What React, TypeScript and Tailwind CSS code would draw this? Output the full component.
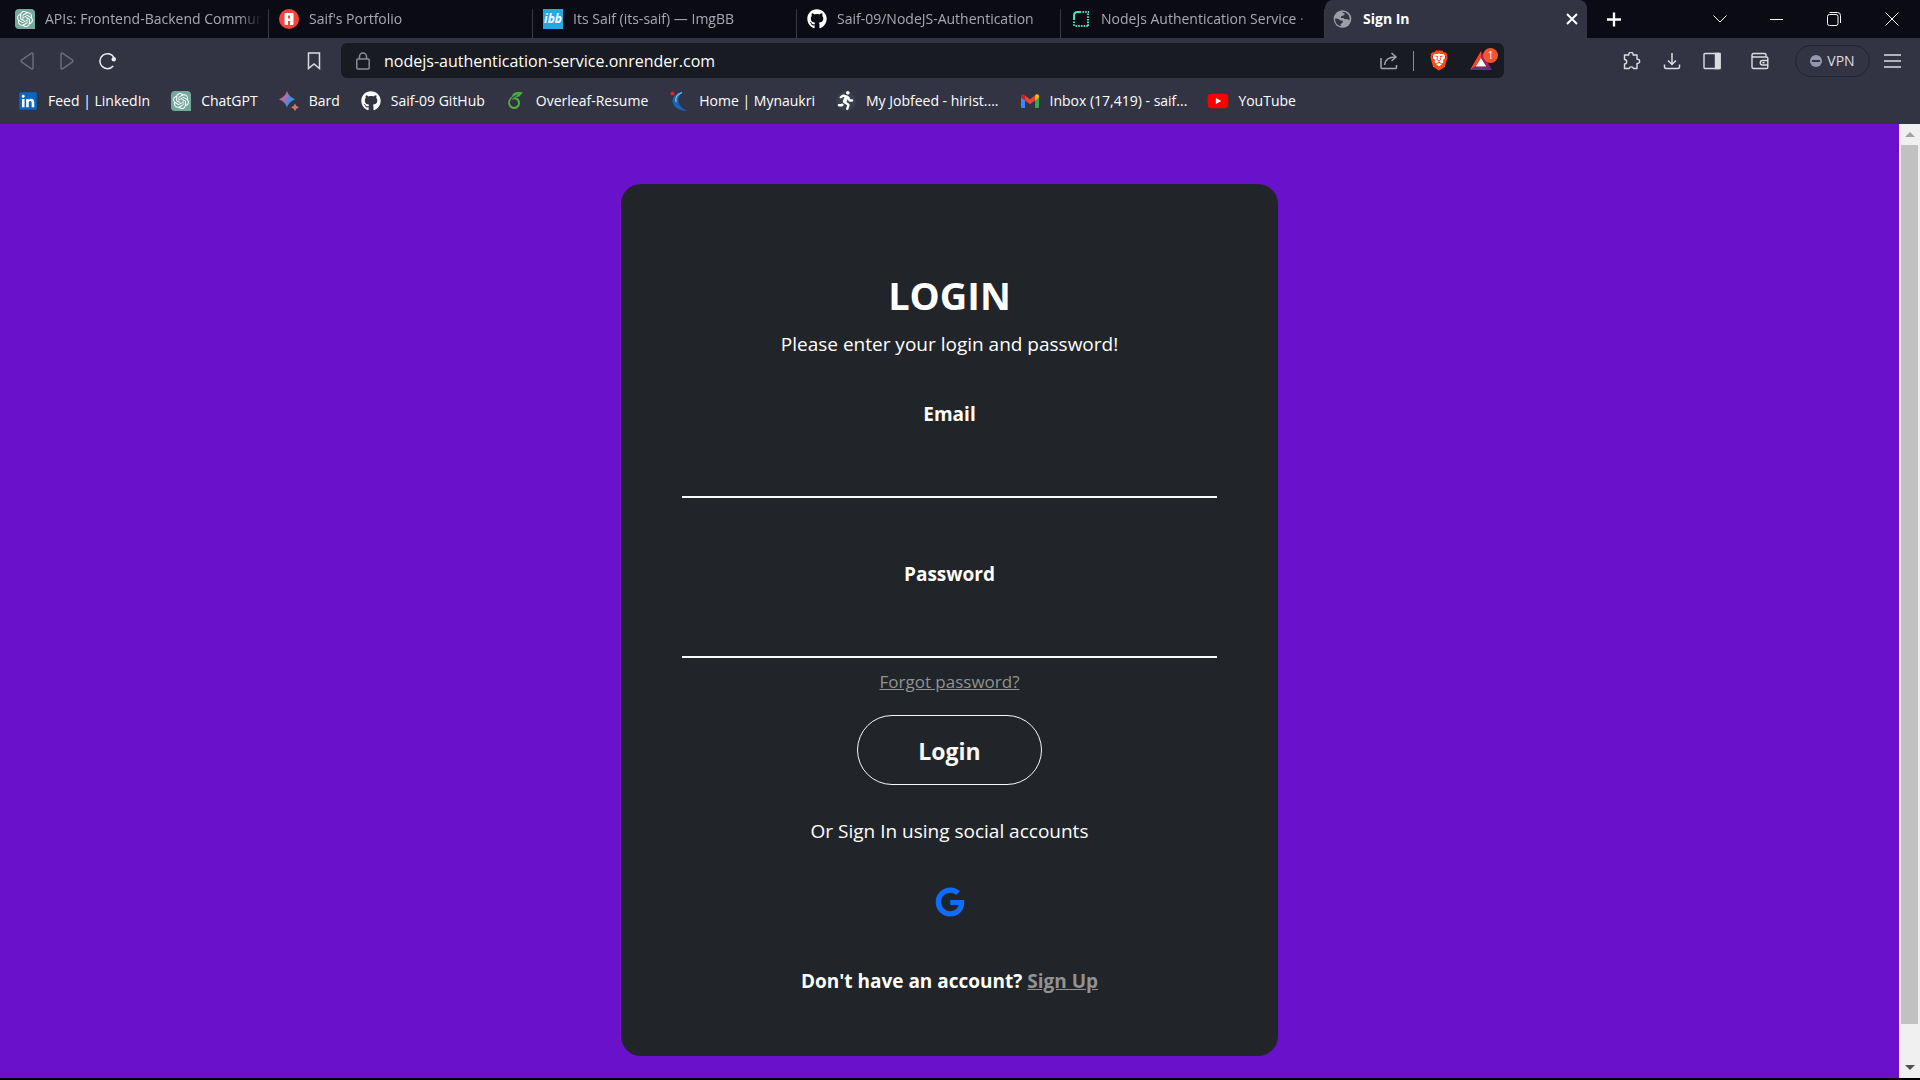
import type { ReactNode } from 'react';
import { FaGithub, FaGoogle, FaLinkedin, FaRunning, FaYoutube } from 'react-icons/fa';
import { SiBrave, SiOpenai, SiOverleaf } from 'react-icons/si';

function OpenAiBadge() {
  return (
    <span className="flex size-5 items-center justify-center rounded-l-[4px] rounded-tr-[4px] bg-[#74aa9c] text-white">
      <SiOpenai size={16} />
    </span>
  );
}

function PortfolioIcon() {
  return (
    <svg width="20" height="20" viewBox="0 0 20 20">
      <circle cx="10" cy="10" r="10" fill="#f9423a" />
      <rect x="5.500" y="4" width="9" height="12" rx="1" fill="#fff" />
      <rect x="9" y="6.500" width="2" height="3" fill="#f9423a" />
      <rect x="9" y="12" width="2" height="4" fill="#f9423a" />
    </svg>
  );
}

function ImgBbIcon() {
  return (
    <span className="flex size-5 items-center justify-center bg-[#23a8e0] text-xs leading-5 font-bold text-white italic">
      ibb
    </span>
  );
}

function RenderIcon() {
  return (
    <svg width="20" height="20" viewBox="0 0 20 20" fill="none" stroke="#46e3b7" strokeWidth="2">
      <path d="M3 11V6.500Q3 3 6.500 3H10" />
      <path d="M11.500 3H18M17 4.500V18M3 12.500V18M4.500 17H17" strokeDasharray="1.600 1.100" />
    </svg>
  );
}

function GlobeIcon() {
  return (
    <svg width="20" height="20" viewBox="0 0 20 20">
      <circle cx="9.500" cy="10" r="8.800" fill="#9da0a8" />
      <path d="M2 9.500l3 .2 2.600 1.800 2.200.3-.2 2-2 1.200v2.400A7.400 7.400 0 0 1 2 9.500z" fill="#323443" />
      <path d="M9.500 2.700l3 .6 3.200 2.600 1.100 3.800-.8 1.600-1.700-1.300-2.500.2-1.300-1.200-2.400.1-.2-1.600 2-.9 1.500-.4.1-1.800-2-.8z" fill="#323443" />
    </svg>
  );
}

function BardIcon() {
  return (
    <svg width="20" height="20" viewBox="0 0 20 20">
      <defs>
        <linearGradient id="bard" x1="0" y1="0.3" x2="1" y2="0.7">
          <stop offset="0" stopColor="#d96570" />
          <stop offset="0.4" stopColor="#a56fb8" />
          <stop offset="0.65" stopColor="#3f8fe0" />
          <stop offset="1" stopColor="#4a9be8" />
        </linearGradient>
      </defs>
      <path d="M8 0Q10 6 16 8.200 10 10.500 8 16.500 6 10.500 0 8.200 6 6 8 0z" fill="url(#bard)" />
      <path d="M16 12.500Q16.800 15.500 20 16.300 16.800 17.200 16 20 15.200 17.200 12 16.300 15.200 15.500 16 12.500z" fill="#d9756f" />
    </svg>
  );
}

function NaukriIcon() {
  return (
    <svg width="20" height="20" viewBox="0 0 20 20">
      <path d="M13.500 1C6.500 2 2.500 6.500 3.800 11.500 5.200 16.500 10 19.700 18 20c-5-2.500-8.500-6-8.700-10C9.200 6.500 10.500 3.500 13.500 1z" fill="#1567b8" />
      <path d="M13 1.500C8 3.500 6 7 7 11" fill="none" stroke="#8ec4f0" strokeWidth="1.200" />
      <circle cx="3.500" cy="2.500" r="2" fill="#e8202a" />
    </svg>
  );
}

function HiristIcon() {
  return (
    <span className="flex size-5 items-center justify-center rounded-full bg-[#3a3f4e] text-white">
      <FaRunning size={19} />
    </span>
  );
}

function GmailIcon() {
  return (
    <svg width="20" height="20" viewBox="0 0 20 20">
      <path d="M1 6v9.700C1 16.400 1.600 17 2.300 17H5V9z" fill="#4285f4" />
      <path d="M15 9v8h2.700c.7 0 1.300-.6 1.300-1.300V6z" fill="#34a853" />
      <path d="M5 4.500V9.500l5 3.800 5-3.800V4.500L10 8.300z" fill="#ea4335" />
      <path d="M1 5v1.500l4 3V4.500L4.100 3.600C2.800 2.600 1 3.500 1 5z" fill="#c5221f" />
      <path d="M15 4.500v5l4-3V5c0-1.500-1.800-2.400-3.100-1.400z" fill="#fbbc04" />
    </svg>
  );
}

function BatIcon() {
  return (
    <svg width="22" height="22" viewBox="0 0 22 22">
      <path d="M11 1L0 20l5.500-3.500L11 8z" fill="#ff4724" />
      <path d="M11 1l11 19-5.500-3.500L11 8z" fill="#9e1f63" />
      <path d="M0 20h22l-5.500-3.500h-11z" fill="#662d91" />
      <path d="M11 8l5.300 8.500H5.700z" fill="#fff" />
    </svg>
  );
}

type Entry = { title: string; icon: ReactNode };

const tabs: Entry[] = [
  { title: 'APIs: Frontend-Backend Commun', icon: <OpenAiBadge /> },
  { title: "Saif's Portfolio", icon: <PortfolioIcon /> },
  { title: 'Its Saif (its-saif) — ImgBB', icon: <ImgBbIcon /> },
  { title: 'Saif-09/NodeJS-Authentication', icon: <FaGithub size={20} color="#fff" /> },
  { title: 'NodeJs Authentication Service ·', icon: <RenderIcon /> },
];

const bookmarks: Entry[] = [
  {
    title: 'Feed | LinkedIn',
    icon: (
      <span className="flex size-4 items-center justify-center bg-white">
        <FaLinkedin size={20} color="#0a66c2" className="shrink-0" />
      </span>
    ),
  },
  { title: 'ChatGPT', icon: <OpenAiBadge /> },
  { title: 'Bard', icon: <BardIcon /> },
  { title: 'Saif-09 GitHub', icon: <FaGithub size={20} color="#fff" /> },
  { title: 'Overleaf-Resume', icon: <SiOverleaf size={17} color="#4cb13f" /> },
  { title: 'Home | Mynaukri', icon: <NaukriIcon /> },
  { title: 'My Jobfeed - hirist....', icon: <HiristIcon /> },
  { title: 'Inbox (17,419) - saif...', icon: <GmailIcon /> },
  {
    title: 'YouTube',
    icon: (
      <span className="flex h-2.5 w-3 items-center justify-center bg-white">
        <FaYoutube size={22} color="#f00" className="shrink-0" />
      </span>
    ),
  },
];

function TabStrip() {
  return (
    <div className="flex h-[38px] bg-[#0b0b15] pl-[5px]">
      <div className="flex min-w-0 items-end" role="tablist">
        {tabs.map((tab) => (
          <button
            key={tab.title}
            role="tab"
            aria-selected={false}
            className="flex h-[29px] w-[264px] min-w-0 shrink items-center gap-2.5 border-r border-[#3a3a42] pr-1.5 pb-[9px] pl-2.5 text-left text-[#a9a9ad]"
          >
            <span className="flex size-5 shrink-0 items-center justify-center">{tab.icon}</span>
            <span className="min-w-0 flex-1 overflow-hidden mask-r-from-[calc(100%-24px)] whitespace-nowrap">
              {tab.title}
            </span>
          </button>
        ))}
        <div className="flex h-[38px] w-[262px] shrink-0 items-center rounded-t-lg bg-[#323443] pr-[9px] pl-2 text-white">
          <button role="tab" aria-selected className="flex flex-1 items-center gap-2.5 font-bold">
            <GlobeIcon />
            Sign In
          </button>
          <button aria-label="Close tab" className="flex size-3 items-center justify-center">
            <svg width="12" height="12" viewBox="0 0 12 12" stroke="currentColor" strokeWidth="2">
              <path d="M1 1l10 10M11 1L1 11" />
            </svg>
          </button>
        </div>
      </div>
      <button aria-label="New tab" className="ml-5 flex w-[14px] items-center">
        <svg width="15" height="15" viewBox="0 0 15 15" stroke="#fff" strokeWidth="2.500">
          <path d="M7.500 0v15M0 7.500h15" />
        </svg>
      </button>
      <div className="ml-auto flex">
        <button aria-label="Search tabs" className="flex w-[57px] items-center justify-center">
          <svg width="14" height="8" viewBox="0 0 14 8" fill="none" stroke="#fff">
            <path d="M.5.5L7 7 13.500.5" />
          </svg>
        </button>
        <button aria-label="Minimize" className="flex w-[57px] items-center justify-center">
          <svg width="13" height="1" viewBox="0 0 13 1">
            <path d="M0 0h13v1H0z" fill="#fff" />
          </svg>
        </button>
        <button aria-label="Restore" className="flex w-[58px] items-center justify-center">
          <svg width="14" height="14" viewBox="0 0 14 14" fill="none" stroke="#fff">
            <rect x="0.5" y="2.500" width="10.500" height="11" rx="2" />
            <path d="M2.500.5H10.500Q13.500.5 13.500 3.500V11" />
          </svg>
        </button>
        <button aria-label="Close window" className="flex w-[57px] items-center justify-center">
          <svg width="14" height="14" viewBox="0 0 14 14" stroke="#fff">
            <path d="M.5.5l13 13M13.500.5l-13 13" />
          </svg>
        </button>
      </div>
    </div>
  );
}

function Toolbar() {
  return (
    <div className="flex h-[45px] items-center">
      <div className="flex w-[341px] shrink-0 items-center pr-5 pl-5">
        <button aria-label="Back" className="w-[40px]">
          <svg width="14" height="18" viewBox="0 0 14 18" fill="none" stroke="#6b6d79" strokeWidth="1.500" strokeLinejoin="round">
            <path d="M11.500 1.200L1.500 8.200q-1 .8 0 1.600l10 7q1.500.5 1.500-1V2.200q0-1.500-1.500-1z" />
          </svg>
        </button>
        <button aria-label="Forward" className="w-[39px]">
          <svg width="14" height="18" viewBox="0 0 14 18" fill="none" stroke="#6b6d79" strokeWidth="1.500" strokeLinejoin="round">
            <path d="M2.500 1.200l10 7q1 .8 0 1.600l-10 7q-1.500.5-1.500-1V2.200q0-1.500 1.500-1z" />
          </svg>
        </button>
        <button aria-label="Reload">
          <svg width="18" height="18" viewBox="0 0 18 18" fill="none" stroke="#eeeef2" strokeWidth="1.500">
            <path d="M14.200 14A7.500 7.500 0 1 1 15 5.500" />
            <circle cx="14.800" cy="7.200" r="2.200" fill="#eeeef2" stroke="none" />
          </svg>
        </button>
        <button aria-label="Bookmark this page" className="ml-auto">
          <svg width="14" height="18" viewBox="0 0 14 18" fill="none" stroke="#dcdde3" strokeWidth="1.500">
            <path d="M1.500 1h11v15.500L7 12l-5.500 4.500z" />
          </svg>
        </button>
      </div>

      <div className="flex h-[35px] min-w-0 flex-1 items-center rounded-md bg-[#181b21] pr-3 pl-[15px]">
        <svg width="14" height="18" viewBox="0 0 14 18" fill="none" stroke="#8a8d94" strokeWidth="1.500" className="shrink-0">
          <rect x="0.800" y="7" width="12.400" height="10" rx="1" />
          <path d="M3.500 7V4.500a3.500 3.500 0 0 1 7 0V7" />
        </svg>
        <input
          aria-label="Address"
          type="text"
          defaultValue="nodejs-authentication-service.onrender.com"
          className="ml-3.5 min-w-0 flex-1 bg-transparent text-base leading-6 text-white outline-none"
        />
        <button aria-label="Share">
          <svg width="18" height="18" viewBox="0 0 18 18" fill="none" stroke="#a5a7ad" strokeWidth="1.500">
            <path d="M1 6v9.500q0 1 1 1h13.500q1 0 1-1V13" />
            <path d="M4.500 13C5 8 8 5 15.500 5M11.500 1l4.500 4-4.500 4" />
          </svg>
        </button>
        <span className="mx-[15px] h-5 w-px bg-[#8d8f95]" />
        <button aria-label="Brave Shields" className="relative flex w-5 justify-center">
          <span className="absolute top-1 h-3.5 w-3 bg-white" />
          <SiBrave size={23} color="#ff4a0f" className="relative" />
        </button>
        <button aria-label="Brave Rewards" className="relative ml-[21px]">
          <BatIcon />
          <span className="absolute -top-0.5 -right-1.5 flex size-[15px] items-center justify-center rounded-full bg-[#fb542b] text-[10px] leading-none text-white">
            1
          </span>
        </button>
      </div>

      <div className="flex w-[416px] shrink-0 items-center justify-end pr-[19px] text-[#dcdde3]">
        <button aria-label="Extensions" className="w-[40px]">
          <svg width="18" height="18" viewBox="0 0 18 18" fill="none" stroke="currentColor" strokeWidth="1.400" strokeLinejoin="round">
            <path d="M1.500 3h4.300a2.200 2.200 0 1 1 4.300 0H14v4.200a2.200 2.200 0 1 1 0 4.300v5H10.500a2.300 2.300 0 0 0-4.400 0H1.500v-4.600a2.200 2.200 0 0 0 0-4.400z" />
          </svg>
        </button>
        <button aria-label="Downloads" className="w-[40px]">
          <svg width="18" height="18" viewBox="0 0 18 18" fill="none" stroke="currentColor" strokeWidth="1.500">
            <path d="M9 1v11M5 8.500l4 4 4-4M1.500 12.500v2.500q0 1.500 1.500 1.500h12q1.500 0 1.500-1.500v-2.500" />
          </svg>
        </button>
        <button aria-label="Sidebar" className="w-[48px]">
          <svg width="18" height="18" viewBox="0 0 18 18" fill="none" stroke="currentColor" strokeWidth="1.400">
            <rect x="1" y="1.500" width="16" height="15" rx="1" />
            <path d="M12.500 1.500H17v15h-4.500z" fill="currentColor" />
          </svg>
        </button>
        <button aria-label="Wallet" className="w-[44px]">
          <svg width="18" height="18" viewBox="0 0 18 18" fill="none" stroke="currentColor" strokeWidth="1.400">
            <path d="M15 5V2.800Q15 1.500 13.500 1.500H2.500Q1 1.500 1 3v12q0 1.500 1.500 1.500h13q1.300 0 1.300-1.300V6.200Q16.800 5 15.500 5H2.500Q1 5 1 3.300" />
            <path d="M17 8.500h-5.500a2.200 2.200 0 0 0 0 4.500H17M11.500 10.700h2" />
          </svg>
        </button>
        <button className="flex h-8 w-[75px] items-center justify-center gap-[5px] rounded-full border border-[#23242f] whitespace-nowrap">
          <span className="flex size-3 items-center justify-center rounded-full bg-[#9597ae]">
            <span className="h-0.5 w-2 bg-[#323443]" />
          </span>
          VPN
        </button>
        <button aria-label="Menu" className="ml-3.5">
          <svg width="17" height="14" viewBox="0 0 17 14" stroke="currentColor" strokeWidth="1.500">
            <path d="M0 1h17M0 7h17M0 13h17" />
          </svg>
        </button>
      </div>
    </div>
  );
}

function BookmarksBar() {
  return (
    <nav aria-label="Bookmarks" className="flex h-[41px] items-center gap-[21px] overflow-hidden pb-1.5 pl-[18px] text-white">
      {bookmarks.map((bookmark) => (
        <a key={bookmark.title} href="#" className="flex shrink-0 items-center gap-2.5">
          <span className="flex size-5 items-center justify-center">{bookmark.icon}</span>
          {bookmark.title}
        </a>
      ))}
    </nav>
  );
}

function Field({ id, label, type }: { id: string; label: string; type: string }) {
  return (
    <div className="flex w-full flex-col gap-[9px]">
      <label htmlFor={id} className="font-bold">
        {label}
      </label>
      <input
        id={id}
        type={type}
        className="h-[60px] w-full border-b-2 border-[#f8f9fa] bg-transparent px-5 text-center outline-none"
      />
    </div>
  );
}

function LoginCard() {
  return (
    <form className="flex w-[657px] max-w-full flex-col items-center rounded-[20px] bg-[#212529] px-[61px] pt-[87px] pb-[60px] text-center text-[19px] leading-[30px] text-white">
      <h1 className="text-[38px] leading-[48px] font-bold">LOGIN</h1>
      <p className="mt-2.5 mb-10">Please enter your login and password!</p>
      <div className="mb-[11px] flex w-full flex-col gap-[61px]">
        <Field id="email" label="Email" type="email" />
        <Field id="password" label="Password" type="password" />
      </div>
      <a href="#" className="text-[17px] leading-[26px] text-[#909294] underline">
        Forgot password?
      </a>
      <button
        type="button"
        className="mt-5 h-[70px] w-[185px] rounded-full border border-[#f8f9fa] pt-0.5 text-[23px] font-bold text-[#f8f9fa]"
      >
        Login
      </button>
      <p className="mt-[31px]">Or Sign In using social accounts</p>
      <a href="#" aria-label="Sign in with Google" className="mt-[41px] mb-[49px] text-[#0d6efd]">
        <FaGoogle size={30} />
      </a>
      <p className="font-bold">
        Don't have an account?{' '}
        <a href="#" className="text-[#909294] underline">
          Sign Up
        </a>
      </p>
    </form>
  );
}

function Scrollbar() {
  return (
    <div className="flex w-[21px] shrink-0 flex-col items-center bg-[#f0f0f0]">
      <div className="flex h-[21px] items-center">
        <svg width="10" height="5" viewBox="0 0 10 5">
          <path d="M0 5l5-5 5 5z" fill="#a3a3a3" />
        </svg>
      </div>
      <div className="w-[17px] flex-1 bg-[#c1c1c1]" />
      <div className="flex h-[54px] items-end pb-2">
        <svg width="10" height="5" viewBox="0 0 10 5">
          <path d="M0 0l5 5 5-5z" fill="#505050" />
        </svg>
      </div>
    </div>
  );
}

export default function App() {
  return (
    <div className="flex min-h-screen flex-col bg-black pb-0.5 font-['Open_Sans','Noto_Sans',sans-serif] text-sm">
      <header className="bg-[#323443]">
        <TabStrip />
        <Toolbar />
        <BookmarksBar />
      </header>
      <div className="flex flex-1">
        <main className="flex flex-1 items-start justify-center bg-[#6a11cb] pt-[60px] pb-[22px]">
          <LoginCard />
        </main>
        <Scrollbar />
      </div>
    </div>
  );
}
